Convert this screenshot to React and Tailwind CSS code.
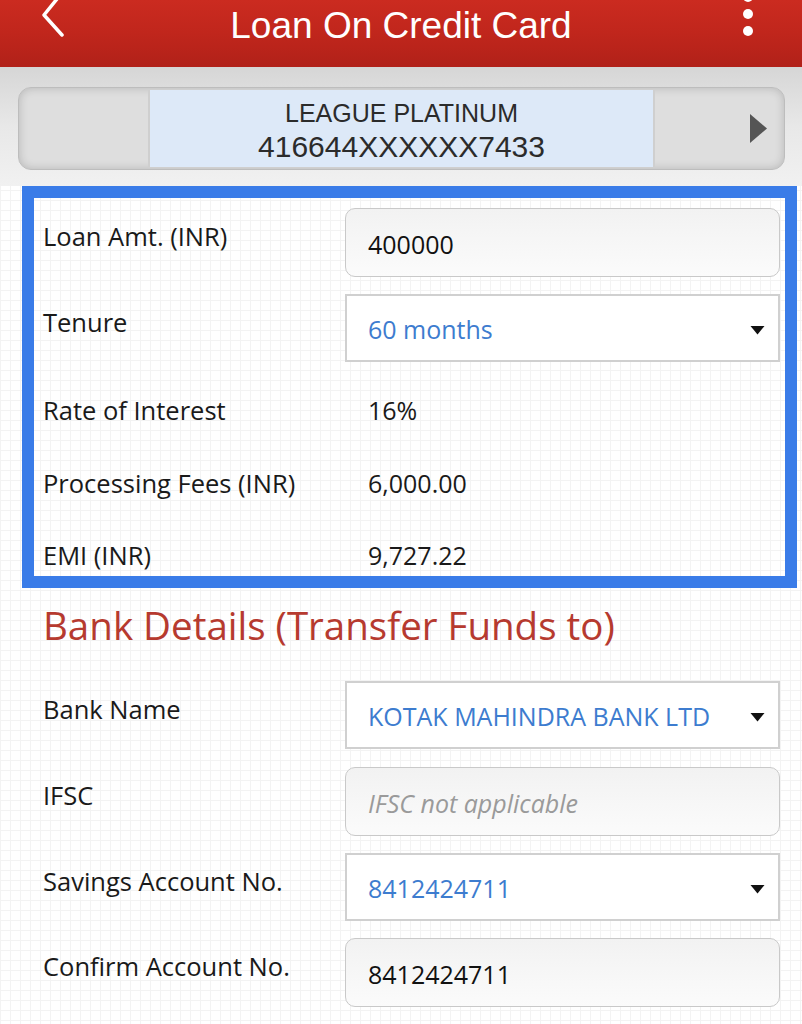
import React from 'react';

const grid =
  "bg-[linear-gradient(to_right,#f3f3f3_1px,transparent_1px),linear-gradient(to_bottom,#f3f3f3_1px,transparent_1px)] bg-[size:10px_10px]";

const Caret = () => (
  <svg width="15" height="10" viewBox="0 0 15 10" className="shrink-0">
    <path d="M0.5 1 L14.5 1 L7.5 9.5 Z" fill="#111" />
  </svg>
);

const TextBox = ({ value, placeholder }) => (
  <div className="w-[435px] h-[69px] shrink-0 rounded-[10px] border-[1.5px] border-[#c9c9c9] bg-gradient-to-b from-[#f2f2f2] to-[#fbfbfb] flex items-center pl-[22px] pt-[4px]">
    {value ? (
      <span className="text-[25px] text-[#111]">{value}</span>
    ) : (
      <span className="text-[25px] italic text-[#9a9a9a]">{placeholder}</span>
    )}
  </div>
);

const SelectBox = ({ value }) => (
  <div className="w-[435px] h-[68px] shrink-0 border-2 border-[#d0d0d0] bg-white flex items-center justify-between pl-[21px] pr-[13px] pt-[4px]">
    <span className="text-[25px] text-[#3d7ccf]">{value}</span>
    <Caret />
  </div>
);

const FieldRow = ({ label, children, className = '' }) => (
  <div className={`flex items-start ${className}`}>
    <div className="w-[302px] shrink-0 pt-[11px] text-[25.5px] leading-[34px] text-[#1a1a1a]">{label}</div>
    {children}
  </div>
);

const InfoRow = ({ label, value, className = '' }) => (
  <div className={`flex items-center h-[34px] ${className}`}>
    <div className="w-[325px] shrink-0 text-[25.5px] leading-[34px] text-[#1a1a1a]">{label}</div>
    <div className="text-[25px] leading-[34px] text-[#1a1a1a]">{value}</div>
  </div>
);

export default function App() {
  return (
    <div className={`w-[802px] h-[1024px] overflow-hidden bg-white font-['Open_Sans',sans-serif] ${grid}`}>
      {/* Header */}
      <div className="relative h-[67px] bg-gradient-to-b from-[#cb2b20] via-[#c0261c] to-[#b12119] flex justify-center">
        <svg className="absolute left-[38px] top-0" width="30" height="42" viewBox="0 0 30 42">
          <polyline points="23,-6 6,15 24,35" fill="none" stroke="#fff" strokeWidth="3.5" strokeLinecap="round" strokeLinejoin="round" />
        </svg>
        <h1 className="pt-[7px] text-[37px] leading-none text-white font-['Liberation_Sans',Arial,sans-serif]">
          Loan On Credit Card
        </h1>
        <div className="absolute left-[743px] top-[-8px] flex flex-col gap-[7px]">
          <span className="w-[10px] h-[10px] rounded-full bg-white" />
          <span className="w-[10px] h-[10px] rounded-full bg-white" />
          <span className="w-[10px] h-[10px] rounded-full bg-white" />
        </div>
      </div>

      {/* Card selector */}
      <div className="h-[119px] bg-gradient-to-b from-[#d6d6d6] via-[#e8e8e8] to-[#f1f1f1] pt-[20px] pl-[18px] pr-[17px]">
        <div className="h-[83px] rounded-[13px] border border-[#bdbdbd] bg-[#dedede] shadow-[inset_0_0_10px_rgba(0,0,0,0.18)] flex items-stretch py-[2px] overflow-hidden">
          <div className="w-[129px] shrink-0" />
          <div className="w-[507px] shrink-0 bg-[#dde9f8] border-l-2 border-r-2 border-[#cfcfcf] flex flex-col items-center justify-center pt-[4px] font-['Liberation_Sans',Arial,sans-serif] text-[#2b2b2b]">
            <div className="text-[25px] leading-[32px]">LEAGUE PLATINUM</div>
            <div className="text-[30px] leading-[36px]">416644XXXXXX7433</div>
          </div>
          <div className="flex-1 flex items-center justify-end pr-[17px]">
            <svg width="17" height="29" viewBox="0 0 17 29">
              <path d="M0 0 L17 14.5 L0 29 Z" fill="#555" />
            </svg>
          </div>
        </div>
      </div>

      {/* Loan details (highlighted) */}
      <div className="ml-[22px] w-[775px] border-[12px] border-[#3a7ce8] pt-[10px] pb-[4px] pl-[9px] pr-[5px]">
        <FieldRow label="Loan Amt. (INR)">
          <TextBox value="400000" />
        </FieldRow>
        <FieldRow label="Tenure" className="mt-[17px]">
          <SelectBox value="60 months" />
        </FieldRow>
        <InfoRow label="Rate of Interest" value="16%" className="mt-[31px]" />
        <InfoRow label="Processing Fees (INR)" value="6,000.00" className="mt-[39px]" />
        <InfoRow label="EMI (INR)" value="9,727.22" className="mt-[38px]" />
      </div>

      {/* Bank details */}
      <div className="pl-[43px] pr-[22px]">
        <h2 className="mt-[11px] text-[38.5px] leading-[52px] text-[#b63a2f]">Bank Details (Transfer Funds to)</h2>
        <FieldRow label="Bank Name" className="mt-[30px]">
          <SelectBox value="KOTAK MAHINDRA BANK LTD" />
        </FieldRow>
        <FieldRow label="IFSC" className="mt-[18px]">
          <TextBox placeholder="IFSC not applicable" />
        </FieldRow>
        <FieldRow label="Savings Account No." className="mt-[17px]">
          <SelectBox value="8412424711" />
        </FieldRow>
        <FieldRow label="Confirm Account No." className="mt-[17px]">
          <TextBox value="8412424711" />
        </FieldRow>
      </div>
    </div>
  );
}
